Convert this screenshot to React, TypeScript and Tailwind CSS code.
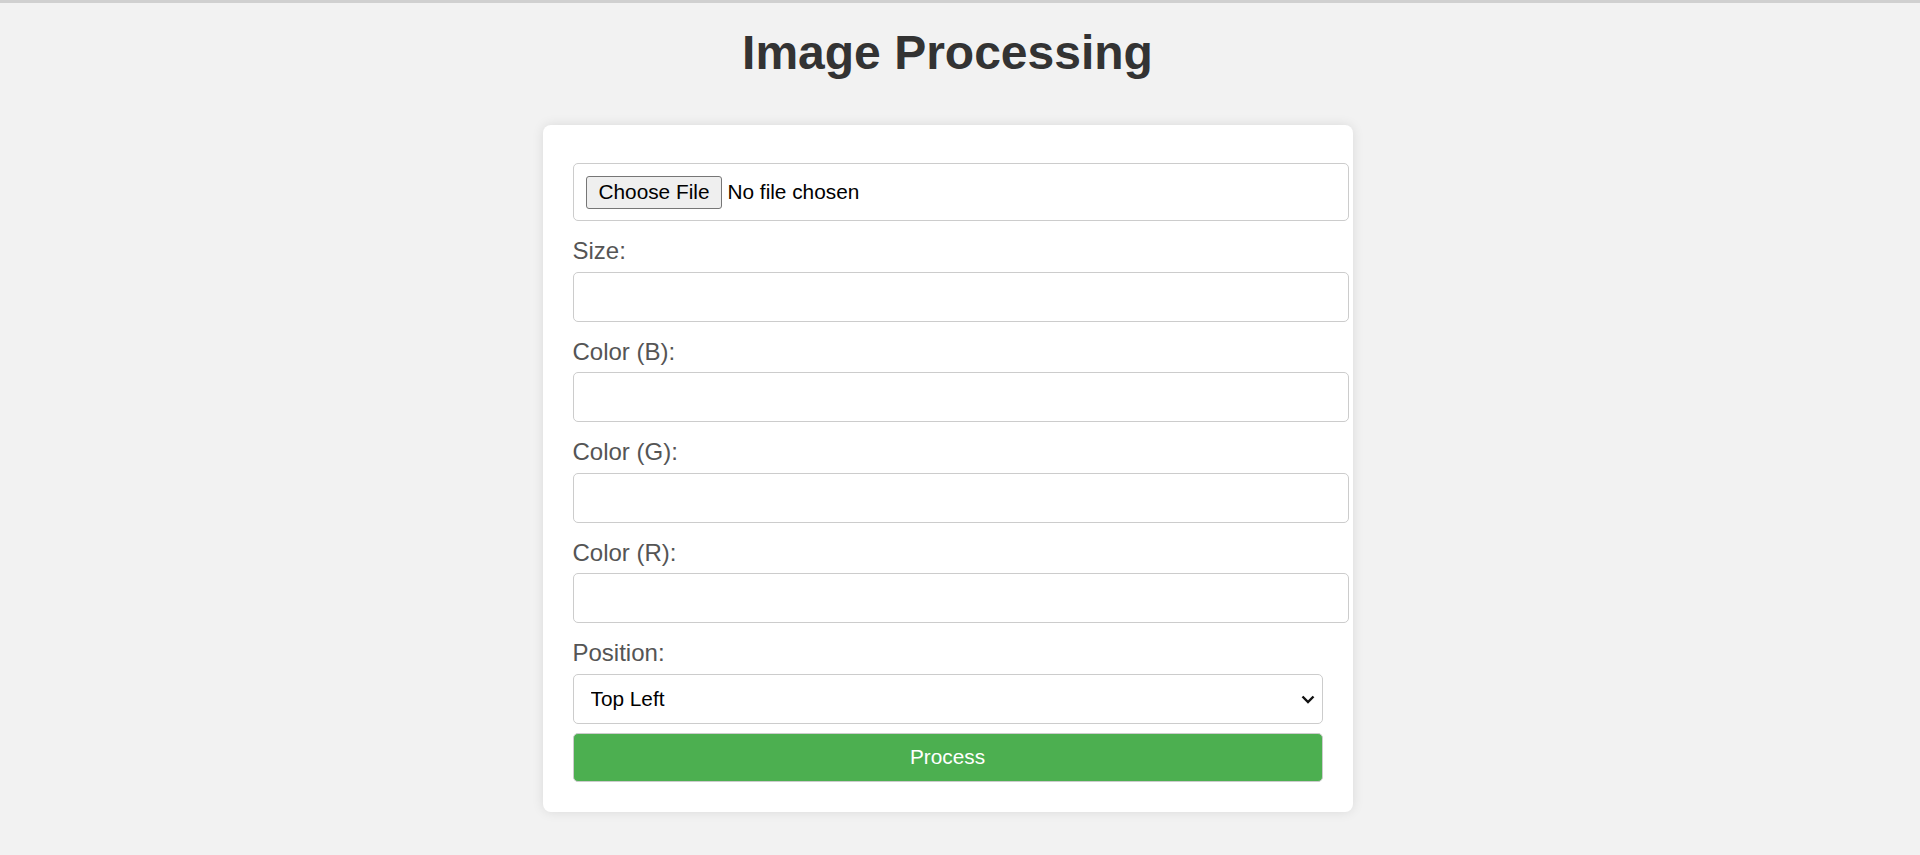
import React from "react";

const labelCls =
  "block mt-[16px] mb-[6.5px] text-[24px] leading-[28px] text-[#555]";
const inputCls =
  "block w-[776px] h-[50px] px-[12px] border border-[#ccc] rounded-[5px] bg-white text-[21px] text-black outline-none";

const App: React.FC = () => {
  return (
    <div
      className="min-h-screen bg-[#f2f2f2] border-t-[3px] border-[#d0d0d0] pr-[25px] pb-[45px]"
      style={{ fontFamily: '"Liberation Sans", Arial, sans-serif' }}
    >
      {/* Title */}
      <h1 className="mt-[22px] mb-[45px] text-center text-[48px] leading-[55px] font-bold text-[#333]">
        Image Processing
      </h1>

      {/* Form card */}
      <div className="w-[810px] mx-auto bg-white rounded-[8px] shadow-[0_0_12px_rgba(0,0,0,0.1)] pt-[38px] px-[30px] pb-[30px]">
        <form onSubmit={(e) => e.preventDefault()}>
          <label className="flex items-center w-[776px] h-[58px] px-[12px] border border-[#ccc] rounded-[5px] bg-white text-[20.8px] text-black cursor-pointer">
            <span className="h-[33px] flex items-center px-[12px] bg-[#efefef] border border-[#767676] rounded-[3px]">
              Choose File
            </span>
            <span className="ml-[5px]">No file chosen</span>
            <input type="file" className="sr-only" />
          </label>

          <label className={labelCls}>Size:</label>
          <input type="text" className={inputCls} />

          <label className={labelCls}>Color (B):</label>
          <input type="text" className={inputCls} />

          <label className={labelCls}>Color (G):</label>
          <input type="text" className={inputCls} />

          <label className={labelCls}>Color (R):</label>
          <input type="text" className={inputCls} />

          <label className={labelCls}>Position:</label>
          <div className="relative w-full">
            <select className="block w-full h-[50px] pl-[17px] pr-[40px] appearance-none border border-[#ccc] rounded-[5px] bg-white text-[20.8px] text-black outline-none">
              <option>Top Left</option>
              <option>Top Right</option>
              <option>Bottom Left</option>
              <option>Bottom Right</option>
            </select>
            <svg
              className="pointer-events-none absolute right-[8px] top-[21px]"
              width="14"
              height="9"
              viewBox="0 0 14 9"
              fill="none"
            >
              <path d="M1.5 1.5 L7 7 L12.5 1.5" stroke="#111" strokeWidth="2.4" />
            </svg>
          </div>

          <button
            type="submit"
            className="block w-full h-[49px] mt-[9px] bg-[#4caf50] border border-[#ccc] rounded-[5px] text-white text-[20.8px]"
          >
            Process
          </button>
        </form>
      </div>
    </div>
  );
};

export default App;
